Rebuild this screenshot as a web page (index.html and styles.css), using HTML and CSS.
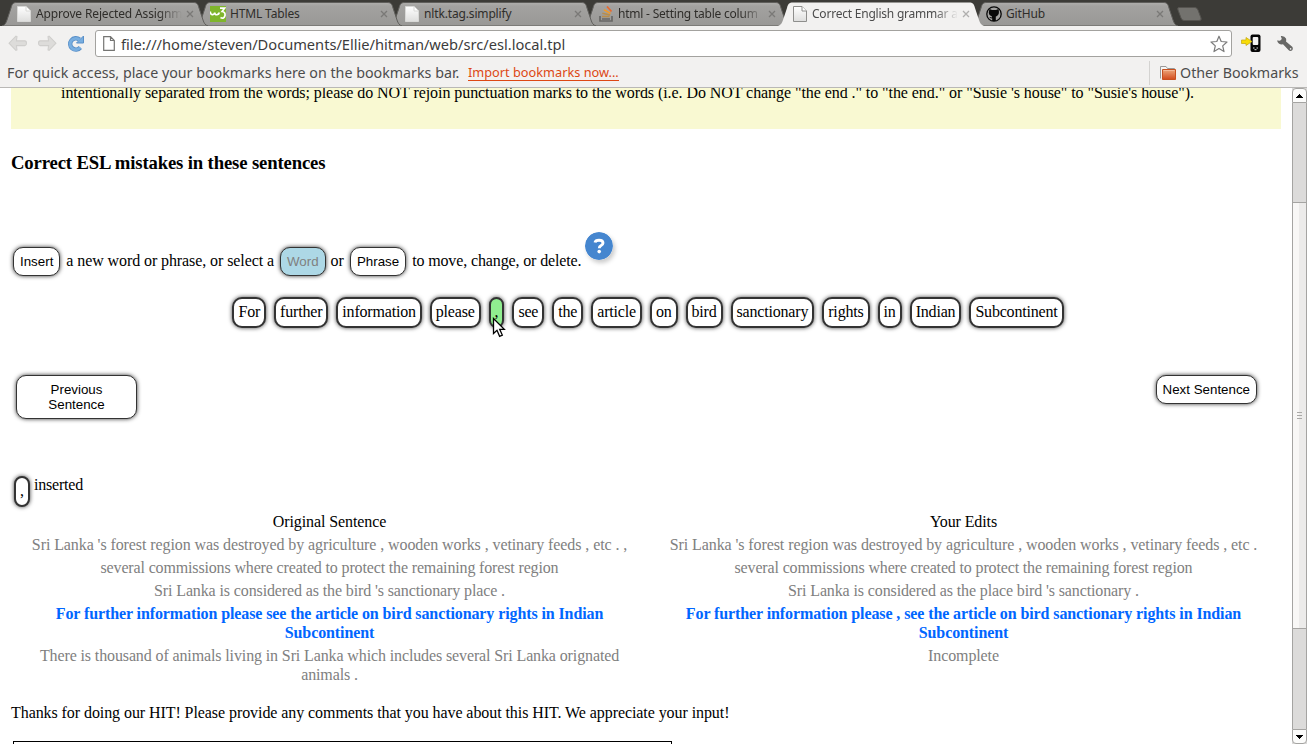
FILE: index.html
```html
<!DOCTYPE html>
<html lang="en">
<head>
<meta charset="utf-8">
<title>Correct English grammar</title>
<link rel="stylesheet" href="styles.css">
</head>
<body>
<svg class="defs" width="0" height="0">
  <defs>
    <linearGradient id="tabg" x1="0" y1="0" x2="0" y2="1"><stop offset="0" stop-color="#b0afad"/><stop offset=".15" stop-color="#a3a2a0"/><stop offset="1" stop-color="#999896"/></linearGradient>
    <linearGradient id="page" x1="0" y1="0" x2="0" y2="1"><stop offset="0" stop-color="#fff"/><stop offset="1" stop-color="#dededd"/></linearGradient>
    <linearGradient id="folder" x1="0" y1="0" x2="0" y2="1"><stop offset="0" stop-color="#eda97d"/><stop offset="1" stop-color="#d24a1c"/></linearGradient>
    <symbol id="tabshape" viewBox="0 0 206 24"><path d="M0 24C3 23 4 21 5 18L9 6C10 2 11 .5 15 .5H191C195 .5 196 2 197 6L201 18C202 21 203 23 206 24Z"/></symbol>
    <symbol id="doc" viewBox="0 0 16 16"><path d="M1.500.5H10L14.500 5V15.500H1.500Z" fill="url(#page)" stroke="currentColor"/><path d="M10 .5V5H14.500" fill="#fff" stroke="currentColor"/></symbol>
    <symbol id="x" viewBox="0 0 8 8"><path d="M1 1L7 7M7 1L1 7" stroke="currentColor" stroke-width="1.300" fill="none"/></symbol>
  </defs>
</svg>
<header class="tabs">
  <div class="tab t1"><svg class="shape"><use href="#tabshape"/></svg><svg class="fav pale"><use href="#doc"/></svg><span class="label fade">Approve Rejected Assignm</span><svg class="close"><use href="#x"/></svg></div>
  <div class="tab t2"><svg class="shape"><use href="#tabshape"/></svg><svg class="fav" viewBox="0 0 16 16"><path fill="#7fb52c" d="M0 0H16V16H0z"/><path d="M.3 5.500Q.5 9 2.800 8.700Q4.500 8.300 4.700 6.500Q5 9 7 8.700Q9 8.300 9.300 6.500M10 2.200H14.500L12 5.500Q15.500 6 15 9.500Q14 13.500 10.500 11.500" fill="none" stroke="#fff" stroke-width="1.700"/></svg><span class="label">HTML Tables</span><svg class="close"><use href="#x"/></svg></div>
  <div class="tab t3"><svg class="shape"><use href="#tabshape"/></svg><svg class="fav pale"><use href="#doc"/></svg><span class="label">nltk.tag.simplify</span><svg class="close"><use href="#x"/></svg></div>
  <div class="tab t4"><svg class="shape"><use href="#tabshape"/></svg><svg class="fav" viewBox="0 0 16 16"><path d="M2 10V15H14V10M4 13H12" fill="none" stroke="#686765" stroke-width="1.700"/><path d="M4 10.500H11.500M4.300 7.200L12 9" stroke="#b98d4b" stroke-width="1.500"/><path d="M6 3.700L12.500 7.500" stroke="#ee9a2b" stroke-width="1.600"/><path d="M9 .5L13.500 5.500" stroke="#e9682c" stroke-width="1.700"/></svg><span class="label fade">html - Setting table colum</span><svg class="close"><use href="#x"/></svg></div>
  <div class="tab t5 active"><svg class="shape"><use href="#tabshape"/></svg><svg class="fav"><use href="#doc"/></svg><span class="label fade">Correct English grammar a</span><svg class="close"><use href="#x"/></svg></div>
  <div class="tab t6"><svg class="shape"><use href="#tabshape"/></svg><svg class="fav" viewBox="0 0 16 16"><circle cx="8" cy="8" r="7.200" fill="#a3a2a0" stroke="#080808" stroke-width="1.300"/><path d="M3.500 3L6 4H10L12.500 3Q14 8 11 10L9.800 10.500V15H6.200V12.500L4 12L3.500 11L6 11.500V10.500Q2 9 3 5Z" fill="#080808"/></svg><span class="label">GitHub</span><svg class="close"><use href="#x"/></svg></div>
  <svg class="newtab" viewBox="0 0 26 16"><path d="M2 1.500H18Q20 1.500 21 4L24 12Q25 14.500 22 14.500H7Q5 14.500 4 12L1 4Q0 1.500 2 1.500Z" fill="#73726e" stroke="#55534f"/></svg>
</header>
<nav class="toolbar">
  <svg class="back" viewBox="0 0 18 16"><path d="M8.500 1.500L8 5.500H16Q17.500 5.500 17.500 7.700T16 10H8L8.500 14L7.500 14.500L1 7.700L7.500 1Z" fill="#dddcda" stroke="#cfcecc"/></svg>
  <svg class="fwd" viewBox="0 0 18 16"><path d="M9.500 1.500L10 5.500H2Q.5 5.500 .5 7.700T2 10H10L9.500 14L10.500 14.500L17 7.700L10.500 1Z" fill="#dddcda" stroke="#cfcecc"/></svg>
  <svg class="reload" viewBox="0 0 18 18"><path d="M13.300 12.500A5.700 5.700 0 1 1 12.500 4.500" fill="none" stroke="#5a90c8" stroke-width="4.400"/><path d="M16.500 1V8H9.500Z" fill="#78aee0" stroke="#5a90c8"/><path d="M13.300 12.500A5.700 5.700 0 1 1 12.800 4.900" fill="none" stroke="#78aee0" stroke-width="2.800"/></svg>
  <div class="address">
    <svg class="urlicon" viewBox="0 0 12 15"><path d="M.7.700H7.500L11.300 4.500V14.300H.7ZM7.500.7V4.500H11.300" fill="#fff" stroke="#757573" stroke-width="1.200"/></svg>
    <span class="url">file:///home/steven/Documents/Ellie/hitman/web/src/esl.local.tpl</span>
    <svg class="star" viewBox="0 0 18 18"><path d="M9 1.200L11.200 6.500L17 7L12.700 10.900L14 16.600L9 13.600L4 16.600L5.300 10.900L1 7L6.800 6.500Z" fill="#fff" stroke="#7b7b7b" stroke-width="1.200" stroke-linejoin="round"/></svg>
  </div>
  <svg class="phone" viewBox="0 0 20 18"><rect x="9.500" y=".5" width="10" height="17.500" rx="2" fill="#050505"/><rect x="11.700" y="3" width="5.600" height="8" rx="1" fill="#f4f3f2"/><path d="M12 14H13.500M15.500 14H17M13.500 15.700H15.500" stroke="#ddd"/><path d="M.5 6H5V3.500L11 7.500L5 11.500V9.500H.5Z" fill="#f8dc05" stroke="#c9ad14" stroke-width=".8"/></svg>
  <svg class="wrench" viewBox="0 0 18 18"><path d="M1 5.500L4 5.800L5.800 4L4.800 1Q8.500 .5 10 3.500Q10.500 5 10 6.500L16.500 12Q17.500 14 16 15.500Q14 16.500 12.500 15L7 9.300Q2.500 10 1 5.500Z" fill="#686866"/><circle cx="14.600" cy="13.900" r=".8" fill="#eee"/></svg>
</nav>
<nav class="bookmarks">
  <span class="hint">For quick access, place your bookmarks here on the bookmarks bar.</span>
  <a class="import">Import bookmarks now...</a>
  <div class="other"><svg class="folder" viewBox="0 0 17 16"><path d="M.5 13.500V1.500H6L7.500 3.500H14.500V6" fill="#f6f5f4" stroke="#999"/><path d="M2.500 4.500H15.500V14.500H2.500Z" fill="url(#folder)" stroke="#c7501f"/><path d="M3.500 5.500H14.500" stroke="#f4b998"/></svg><span class="othertext">Other Bookmarks</span></div>
</nav>
<div class="view">
  <main class="content">
    <div class="notice">intentionally separated from the words; please do NOT rejoin punctuation marks to the words (i.e. Do NOT change "the end ." to "the end." or "Susie 's house" to "Susie's house").</div>
    <h3 class="title">Correct ESL mistakes in these sentences</h3>
    <div class="modes">
      <button class="btn">Insert</button><span class="m1">a new word or phrase, or select a</span><button class="btn word-mode">Word</button><span class="m2">or</span><button class="btn">Phrase</button><span class="m3">to move, change, or delete.</span>
      <svg class="help" viewBox="0 0 28 28"><circle cx="14" cy="14" r="14" fill="#4586cf"/><path d="M10 10.500Q10.500 8.200 14 8.200Q18 8.200 18 11Q18 12.700 15.800 13.800Q14.300 14.600 14.300 16.300" fill="none" stroke="#fff" stroke-width="2.900"/><circle cx="14.200" cy="19.600" r="1.800" fill="#fff"/></svg>
    </div>
    <div class="words">
      <span class="chip">For</span><span class="chip">further</span><span class="chip">information</span><span class="chip">please</span><span class="chip added">,<svg class="cursor" viewBox="0 0 14 21"><path d="M1.500 1.500V16.500L5 13.300L7.600 19.300L10.300 18.100L7.700 12.300H12.300Z" fill="#fff" stroke="#000" stroke-width="1.300"/></svg></span><span class="chip">see</span><span class="chip">the</span><span class="chip">article</span><span class="chip">on</span><span class="chip">bird</span><span class="chip">sanctionary</span><span class="chip">rights</span><span class="chip">in</span><span class="chip">Indian</span><span class="chip">Subcontinent</span>
    </div>
    <div class="pager"><button class="btn prev">Previous<br>Sentence</button><button class="btn">Next Sentence</button></div>
    <div class="log"><span class="chip low">,</span><span class="logtext">inserted</span></div>
    <div class="compare">
      <div class="head">Original Sentence</div><div class="head">Your Edits</div>
      <div class="long">Sri Lanka 's forest region was destroyed by agriculture , wooden works , vetinary feeds , etc . ,</div><div class="long">Sri Lanka 's forest region was destroyed by agriculture , wooden works , vetinary feeds , etc .</div>
      <div class="tight">several commissions where created to protect the remaining forest region</div><div class="tight">several commissions where created to protect the remaining forest region</div>
      <div>Sri Lanka is considered as the bird 's sanctionary place .</div><div>Sri Lanka is considered as the place bird 's sanctionary .</div>
      <div class="current">For further information please see the article on bird sanctionary rights in Indian<br>Subcontinent</div><div class="current">For further information please , see the article on bird sanctionary rights in Indian<br>Subcontinent</div>
      <div>There is thousand of animals living in Sri Lanka which includes several Sri Lanka orignated<br>animals .</div><div>Incomplete</div>
    </div>
    <p class="thanks">Thanks for doing our HIT! Please provide any comments that you have about this HIT. We appreciate your input!</p>
    <div class="comment"></div>
  </main>
  <aside class="scroll">
    <div class="arrow up"><svg viewBox="0 0 7 4"><path d="M3 0H4V1H5V2H6V3H7V4H0V3H1V2H2V1H3Z"/></svg></div>
    <div class="track before"></div>
    <div class="thumb"><svg viewBox="0 0 5 7"><path d="M0 .5H5M0 3.500H5M0 6.500H5" stroke="#aaa9a7"/></svg></div>
    <div class="track after"></div>
    <div class="arrow down"><svg viewBox="0 0 7 4"><path d="M0 0H7V1H6V2H5V3H4V4H3V3H2V2H1V1H0Z"/></svg></div>
  </aside>
</div>
</body>
</html>
```
FILE: styles.css
```css
* { box-sizing: border-box; }
body { margin: 0; width: 1307px; height: 744px; overflow: hidden; display: flex; flex-direction: column; background: #fff; font: 16px/19px "Liberation Serif", serif; color: #000; }
.defs { position: absolute; }
svg { display: block; flex: none; }

.tabs { height: 26px; flex: none; display: flex; padding: 2px 0 0 2px; background: #3c3b37; }
.tab { position: relative; flex: none; width: 206px; height: 24px; margin-right: -12px; padding-left: 14px; display: flex; align-items: center; color: #2f2d2a; font: 12px/22px "Noto Sans", sans-serif; }
.t1 { z-index: 6; } .t2 { z-index: 5; } .t3 { z-index: 4; } .t4 { z-index: 3; } .t6 { z-index: 1; }
.shape { position: absolute; left: 0; top: 0; width: 206px; height: 24px; z-index: -1; fill: url(#tabg); stroke: #5f5e5b; stroke-width: 1; }
.active { z-index: 9; color: #4c4c4c; }
.active .shape { fill: #f2f1f0; stroke: none; }
.fav { width: 16px; height: 16px; margin-bottom: 1px; color: #8e8e8c; }
.pale { color: #d8d8d6; }
.label { width: 146px; margin-left: 4px; overflow: hidden; white-space: nowrap; letter-spacing: -.15px; }
.t4 .label, .active .label { letter-spacing: -.22px; }
.fade { -webkit-mask-image: linear-gradient(90deg, #000 84%, transparent); mask-image: linear-gradient(90deg, #000 84%, transparent); }
.close { width: 8px; height: 8px; margin-left: 4px; color: #7a7977; }
.active .close { color: #b0afae; }
.newtab { width: 26px; height: 16px; margin: 4px 0 0 11px; }

.toolbar { height: 34px; flex: none; display: flex; padding: 4px 12px 0 8px; background: #f2f1f0; }
.back { width: 19px; height: 17px; margin-top: 5px; }
.fwd { width: 19px; height: 17px; margin: 5px 0 0 11px; }
.reload { width: 18px; height: 18px; margin: 5px 0 0 10px; }
.address { width: 1137px; height: 27px; margin-left: 10px; padding: 0 3px 0 7px; display: flex; align-items: center; background: #fff; border: 1px solid #a3a29f; border-radius: 3px; }
.urlicon { width: 12px; height: 15px; }
.url { flex: 1; margin-left: 6px; font: 14.67px/24px "Noto Sans", sans-serif; color: #3c3c3c; letter-spacing: -.02px; white-space: nowrap; }
.star { width: 18px; height: 18px; }
.phone { width: 20px; height: 18px; margin: 4px 0 0 9px; }
.wrench { width: 18px; height: 18px; margin: 5px 0 0 15px; }

.bookmarks { height: 28px; flex: none; display: flex; align-items: center; padding: 0 0 2px 7px; background: #f2f1f0; border-bottom: 1px solid #b9b8b6; font: 14.25px/23px "Noto Sans", sans-serif; color: #4c4c4c; white-space: nowrap; }
.hint { width: 461px; }
.import { font-size: 12.75px; line-height: 15px; color: #dd4814; border-bottom: 1px solid #dd4814; }
.other { margin-left: auto; width: 158px; height: 24px; padding-left: 10px; display: flex; align-items: center; border-left: 1px solid #d4d3d1; }
.folder { width: 17px; height: 16px; }
.othertext { margin-left: 3px; }

.view { flex: 1; min-height: 0; display: flex; overflow: hidden; }
.content { width: 1292px; padding: 0 11px; overflow: hidden; }
.notice { height: 41px; padding-left: 50px; background: #f9f9d2; line-height: 10px; white-space: nowrap; letter-spacing: -.067px; }
.title { margin: 23px 0 0; font-size: 18.72px; line-height: 21px; letter-spacing: -.15px; }
.modes { display: flex; align-items: flex-end; height: 44px; margin: 59px 0 0 2px; line-height: 31px; white-space: nowrap; }
.btn { height: 29px; padding: 0 6px; background: #fff; border: 1px solid #333; border-radius: 10px; box-shadow: 0 0 4px #333; font: 13.333px/15px "Liberation Sans", sans-serif; color: #000; }
.word-mode { background: #add8e6; color: #808080; }
.m1 { margin: 0 6px; letter-spacing: -.09px; } .m2 { margin: 0 6px 0 5px; } .m3 { margin: 0 4px 0 6px; letter-spacing: -.13px; }
.help { align-self: flex-start; width: 28px; height: 28px; border-radius: 50%; box-shadow: 2px 3px 4px #ccc; }
.words { display: flex; justify-content: center; gap: 8px; margin: 21px 0 0 4px; letter-spacing: -.19px; }
.chip { position: relative; height: 31px; padding: 3px 4px; background: #fff; border: 2px solid #333; border-radius: 10px; box-shadow: 0 0 4px #444; }
.added { background: #90ee90; }
.cursor { position: absolute; left: 1px; top: 18px; width: 14px; height: 21px; z-index: 2; }
.pager { display: flex; justify-content: space-between; align-items: flex-start; margin: 47px 24px 0 5px; }
.prev { width: 121px; height: 44px; }
.log { display: flex; gap: 4px; margin: 57px 0 0 3px; }
.low { padding-top: 7px; line-height: 11px; }
.logtext { line-height: 18px; letter-spacing: -.2px; }
.compare { display: grid; grid-template-columns: 637px 631px; row-gap: 4px; margin-top: 5px; text-align: center; color: #808080; white-space: nowrap; letter-spacing: -.12px; }
.head { color: #000; letter-spacing: -.1px; }
.long { letter-spacing: -.09px; }
.tight { letter-spacing: -.15px; }
.current { color: #06f; font-weight: bold; letter-spacing: -.1px; }
.thanks { margin: 19px 0 0; letter-spacing: -.073px; }
.comment { width: 659px; height: 40px; margin: 19px 0 0 2px; border: 1px solid #000; }

.scroll { width: 15px; display: flex; flex-direction: column; background: #dcdbda; }
.arrow { flex: none; height: 15px; display: flex; align-items: center; justify-content: center; background: #fcfcfb; border: 1px solid #a5a4a2; }
.arrow svg { width: 7px; height: 4px; }
.up { border-radius: 4px 4px 0 0; }
.down { border-radius: 0 0 4px 4px; }
.track { border: solid #a5a4a2; border-width: 0 1px; }
.before { height: 99px; }
.after { flex: 1; }
.thumb { flex: none; height: 427px; display: flex; align-items: center; justify-content: center; border: 1px solid #a5a4a2; background: linear-gradient(90deg, #f8f7f6 50%, #ecebea 50%); }
.thumb svg { width: 5px; height: 7px; }
```
